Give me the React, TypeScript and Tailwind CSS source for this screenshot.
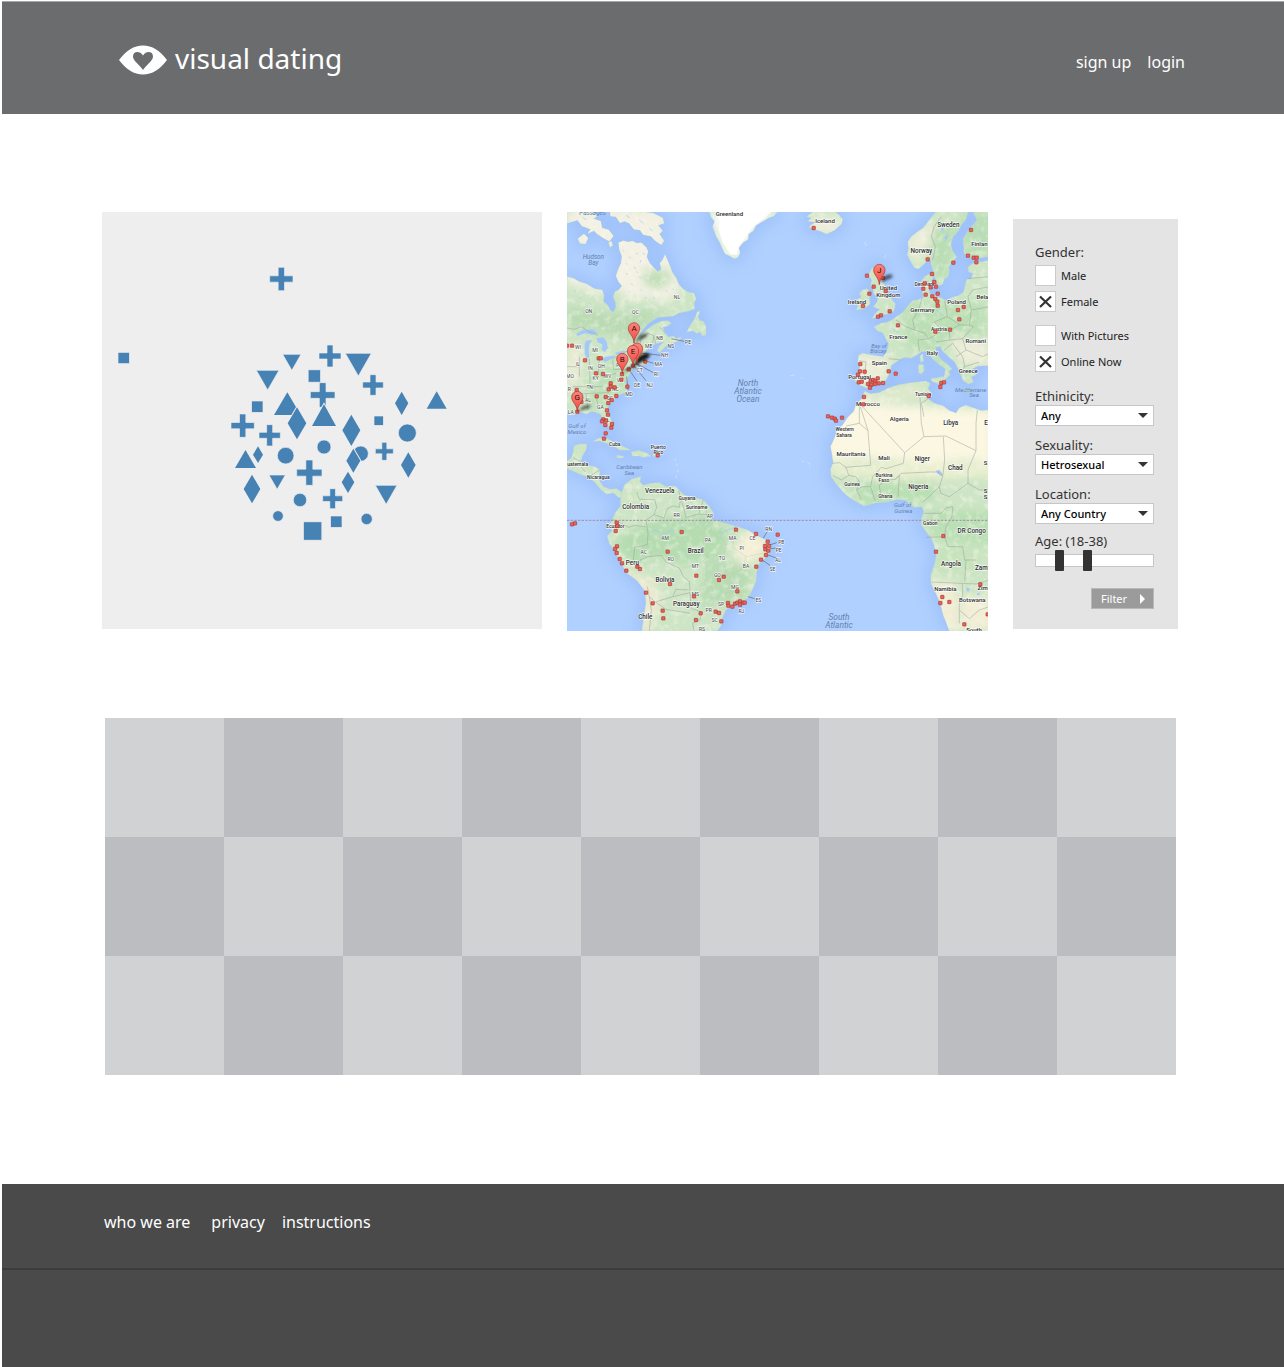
import { useState } from "react";
import type { ReactNode } from "react";

const BLUE = "#4682b4";

/* ---------- Shape scatter ---------- */

const pluses = [
  [184, 87, 35, 19], [330, 318, 33, 18], [459, 405, 31, 18], [308, 435, 37, 20], [68, 527, 35, 19],
  [149, 556, 32, 18], [493, 604, 27, 15], [268, 668, 38, 21], [338, 746, 30, 17],
];
const downTriangles = [
  [188, 243, 313, 361], [376, 454, 310, 378], [109, 177, 361, 420], [147, 196, 675, 718], [466, 531, 706, 763],
];
const upTriangles = [
  [162, 242, 427, 495], [276, 348, 463, 528], [620, 680, 424, 476], [45, 108, 600, 654],
];
const diamonds = [
  [545, 460, 20, 35], [231, 520, 28, 48], [394, 541, 27, 47], [114, 614, 15, 25],
  [400, 632, 21, 36], [565, 645, 22, 38], [96, 717, 25, 43], [384, 697, 19, 32],
];
const circles = [
  [562, 549, 27], [312, 591, 21], [197, 617, 25], [422, 611, 23], [240, 750, 20], [174, 798, 16], [440, 807, 17],
];
const squares = [
  [283, 378, 37], [112, 470, 34], [476, 512, 28], [278, 843, 55], [349, 815, 34], [-289, 324, 34],
];

function ShapePlot() {
  return (
    <svg viewBox="-354 -114 1320 1251" className="block w-full bg-[#eeeeee]" role="img" aria-label="Matches plotted as shapes">
      <g fill={BLUE} stroke="#eeeeee" strokeWidth="2">
        {circles.map(([x, y, r]) => <circle key={`${x}-${y}`} cx={x} cy={y} r={r} />)}
        {squares.map(([x, y, s]) => <rect key={`${x}-${y}`} x={x - s / 2} y={y - s / 2} width={s} height={s} />)}
        {pluses.map(([x, y, r, t]) => {
          const h = t / 2;
          return (
            <path key={`${x}-${y}`} d={`M${x - h} ${y - r}h${t}v${r - h}h${r - h}v${t}h${h - r}v${r - h}h${-t}v${h - r}h${h - r}v${-t}h${r - h}z`} />
          );
        })}
        {downTriangles.map(([a, b, t, p]) => <path key={`${a}-${t}`} d={`M${a} ${t}H${b}L${(a + b) / 2} ${p}z`} />)}
        {upTriangles.map(([a, b, p, t]) => <path key={`${a}-${t}`} strokeWidth="6" paintOrder="stroke" d={`M${a} ${t}H${b}L${(a + b) / 2} ${p}z`} />)}
        {diamonds.map(([x, y, w, h]) => <path key={`${x}-${y}`} strokeWidth="6" paintOrder="stroke" d={`M${x} ${y - h}l${w} ${h}l${-w} ${h}l${-w} ${-h}z`} />)}
      </g>
    </svg>
  );
}

/* ---------- Map ---------- */

const land = [
  // North America
  "M3 200L20 204 40 215 62 222 85 236 108 240 114 256 112 275 124 284 134 302 142 307 150 292 148 275 142 262 146 246 158 240 168 228 158 215 150 198 156 180 165 160 168 140 160 118 158 98 172 92 186 96 200 94 212 100 226 98 240 112 246 124 242 140 250 158 264 174 276 186 286 178 282 160 290 150 297 134 304 150 312 168 318 186 330 204 338 222 350 236 366 246 384 250 390 268 384 280 386 296 366 304 340 308 322 318 296 320 276 322 262 330 244 342 228 362 216 384 240 362 262 344 286 334 306 332 316 340 304 348 290 352 296 368 308 382 322 378 330 386 346 382 336 394 312 402 296 412 282 426 274 424 280 408 296 396 280 398 262 404 246 414 238 428 240 444 226 452 240 456 246 450 246 460 226 466 204 472 194 486 186 500 184 520 176 506 172 500 180 526 184 544 166 552 150 558 142 572 128 584 122 600 130 620 140 638 142 656 132 658 122 640 112 632 104 612 88 606 74 604 62 612 42 606 20 614 3 612z",
  "M362 366L374 344 386 326 394 306 402 304 396 320 402 332 412 334 420 350 420 374 410 378 402 366 392 370 380 362z",
  // Arctic islands
  "M3 6H78L96 16 82 26 104 34 108 54 128 60 142 78 130 94 112 84 94 72 84 62 66 70 74 58 48 48 34 30 3 40z",
  "M36 86L54 72 66 84 58 102 42 100z",
  "M132 6H236L262 10 290 24 294 40 276 46 290 62 280 72 294 92 286 104 268 92 254 78 232 74 222 60 204 58 190 40 176 34 162 38 150 20 134 18z",
  "M128 98l8 -4 4 12 -8 6z",
  // Greenland
  "M430 6L436 22 446 34 440 50 446 66 452 82 462 98 470 118 478 132 492 138 504 146 516 142 522 128 518 114 530 98 546 88 548 72 562 62 570 46 590 34 606 24 624 18 634 6z",
  // Iceland
  "M740 6L722 20 736 24 726 34 750 36 734 46 730 52 746 58 760 62 782 72 806 60 826 42 830 28 818 14 808 6z",
  // Scandinavia
  "M1110 6L1096 22 1084 38 1072 54 1054 66 1036 80 1026 96 1028 116 1024 134 1034 154 1044 172 1058 176 1074 162 1088 148 1094 150 1098 170 1104 190 1108 212 1118 228 1130 222 1134 208 1146 200 1150 184 1148 170 1162 152 1172 140 1160 124 1154 104 1160 82 1176 64 1186 44 1198 30 1206 6z",
  "M1222 6L1234 30 1216 50 1204 66 1192 88 1194 110 1194 128 1208 142 1232 146 1270 138V6z",
  // Continental Europe
  "M1270 152L1240 156 1220 160 1206 172 1208 186 1222 190 1214 208 1204 206 1198 222 1194 246 1176 258 1158 262 1140 272 1126 264 1112 260 1102 252 1094 256 1088 240 1096 214 1102 198 1090 192 1076 200 1066 214 1068 240 1074 262 1056 270 1040 272 1026 288 1014 304 998 316 978 330 960 338 946 340 924 350 934 362 950 368 960 386 968 402 962 426 952 440 920 436 890 430 878 436 876 456 882 470 874 494 868 514 884 526 902 534 922 524 946 520 960 510 972 486 976 466 996 452 1014 442 1036 444 1052 436 1068 424 1084 424 1096 442 1118 462 1138 476 1136 496 1126 514 1140 506 1152 494 1148 484 1158 476 1142 462 1124 448 1112 430 1108 412 1122 408 1130 424 1148 440 1166 456 1176 474 1184 492 1192 512 1208 522 1222 516 1216 500 1230 494 1218 476 1236 468 1270 466z",
  "M1096 506L1130 500 1132 514 1120 522 1098 514z",
  "M1058 464h14l2 18 -8 10 -8 -4z", "M1062 438l8 -6 2 22 -8 2z",
  "M1192 538l24 2 -2 6 -22 -4z", "M984 490l8 -2 2 6 -8 2z",
  // Great Britain and Ireland
  "M916 178L930 164 948 168 940 184 956 196 948 214 958 228 962 248 972 262 988 282 984 302 964 312 944 314 918 326 930 308 942 298 922 290 934 276 936 262 924 252 922 238 914 228 918 210 908 196z",
  "M890 240L904 236 914 248 910 262 912 282 894 296 872 300 876 282 874 268 886 262 880 250z",
  // Africa
  "M896 544L914 552 940 548 968 534 1000 524 1036 518 1080 514 1092 520 1086 536 1096 548 1086 566 1104 580 1132 588 1150 602 1170 610 1180 594 1200 586 1222 594 1246 602 1270 600V1263H1150L1142 1240 1132 1216 1122 1176 1108 1146 1096 1122 1094 1096 1106 1062 1112 1034 1104 1004 1094 982 1078 962 1066 944 1066 926 1074 906 1068 890 1046 892 1030 882 1020 870 992 868 962 876 930 878 894 888 868 874 844 858 826 840 808 818 796 800 794 778 802 758 798 730 794 710 806 684 812 664 830 646 846 622 864 604 872 580 888 566z",
  // Central America
  "M3 752L16 744 22 726 24 708 40 702 62 702 60 720 48 740 44 754 62 766 88 770 102 780 98 808 112 830 132 838 152 836 166 846 170 862 158 862 142 848 122 852 104 838 88 818 68 800 40 792 20 782 3 776z",
  // South America
  "M168 846L176 824 196 808 224 800 222 816 232 826 256 820 280 818 300 830 328 828 340 842 356 856 384 862 412 870 430 890 442 908 434 928 450 932 476 940 508 948 544 960 574 978 600 990 612 1006 612 1026 598 1044 580 1060 572 1086 570 1112 560 1138 546 1164 522 1176 500 1182 480 1200 470 1220 464 1248 452 1263H228L234 1220 240 1180 238 1144 214 1112 184 1090 164 1058 148 1026 130 1000 124 978 138 962 130 946 140 926 148 908 164 888 164 864z",
  // Caribbean
  "M82 694L100 684 124 686 148 700 176 712 192 720 162 720 144 708 118 698 98 692z",
  "M196 726L218 722 240 728 254 738 234 742 220 738 200 738z",
  "M154 736l20 4 -8 5 -14 -3z", "M262 733h20v6h-20z",
];

const lakes = [
  "M56 402L60 392 78 390 72 400 68 418 70 440 62 446 56 430z",
  "M92 384L112 382 122 396 126 414 116 426 106 418 110 404 94 396z",
  "M30 372L50 360 80 358 96 370 78 374 56 370 36 378z",
  "M104 448L122 440 148 436 142 444 118 456z",
  "M148 428L170 422 182 424 166 432 150 434z",
  "M1110 782l10 -2 10 12 -4 6 -12 -8z", "M1204 1132l8 6 -6 8 -6 -8z", "M1234 1150l8 0 -2 5 -8 0z",
  "M1136 84l6 -12 4 8 -6 14z", "M1126 60l4 -22 4 14 -4 14z",
];

const borders = [
  "M3 354L24 358 46 350 64 362 96 376", "M140 446L176 428 202 412 222 404 226 382 246 370 262 376 270 402",
  "M40 440V500M70 446L72 520M100 450L96 500M3 470H44M20 530H110M110 500L150 490M20 552L130 548M60 552L66 600M90 552L96 590M140 448L142 478H186",
  "M212 846L220 868 266 868 272 892 264 914 240 930 246 970 244 1004 206 1012 202 1050 210 1056 246 1040 286 1036 300 1056 340 1074 352 1100 370 1114 372 1140 330 1138 320 1160 268 1176 250 1160 244 1130",
  "M264 914L294 924 304 896 322 888 340 892 344 864 338 842M344 864L352 890 360 922 398 912 412 870M398 912L430 914",
  "M140 928L166 940 188 952 206 946 238 950", "M250 1160L256 1200 250 1263M320 1160L372 1148 376 1196 408 1206 402 1230 380 1240 384 1263M268 1176L300 1198 372 1210",
  "M22 744L44 754M44 770L58 786M68 800L102 780",
  "M880 574L880 640 840 648M880 580L906 662 914 766 838 772M906 662L880 640M880 580L1016 728 1074 680 1140 678 1230 722V640L1234 600M1074 680L1066 640 1062 560M1086 566L1066 580 1074 620",
  "M1016 728L1012 760 960 776 946 772 920 800 914 830 928 874M800 760L820 758 840 772 848 796 826 810 800 796M848 796L870 800 880 816 872 840 886 868M914 830L890 830 870 840M946 868L940 826 960 810 988 808 1000 796 996 860M988 808L1006 790 1090 786 1116 786 1130 800 1120 830 1090 860 1070 876M1130 800L1136 750 1132 680M1230 722L1206 780 1206 820 1150 860 1124 850 1120 830M1206 820L1240 840 1270 840M1074 910L1124 910 1140 894 1160 890 1158 920 1140 950 1136 980 1080 982M1136 980L1146 1010 1190 1010 1196 1050 1230 1050M1096 1116L1230 1122 1270 1110M1196 1116L1200 1050M1190 1122V1160L1180 1170 1180 1240M1180 1200L1210 1226 1240 1200 1270 1190",
  "M1100 150L1108 110 1096 80 1104 50 1126 20", "M1078 214L1090 216M1068 264L1058 300 1040 330 1046 360 1078 370 1086 386 1056 390 1060 424M1046 360L1020 350 990 330M968 446L1006 450M880 452L900 456 896 500 888 520M1136 272L1144 320 1104 336 1130 360 1100 380 1086 386M1144 320L1182 344 1210 346 1216 300 1206 260M1182 344L1150 362 1130 360M1150 362L1152 390 1110 396M1152 390L1190 386 1222 350 1210 346M1190 386L1200 420 1170 440M1200 420L1250 440 1270 430M1134 420L1160 400 1190 440 1196 470 1184 490M1196 470L1240 456M1216 300L1270 290M1206 260L1220 240 1270 230M1204 206L1270 200",
  "M260 400L264 376", "M296 368L282 352",
];

const stateBorders =
  "M420 900L430 960 410 1000 424 1040 400 1064 346 1074M430 960L480 1000 470 1060 440 1070M508 948L500 1010 540 1040 532 1072M540 1040L590 1030M532 1072L500 1094 520 1140 470 1150M424 1040L420 1110 380 1150M470 1150L440 1180 408 1206";

const leaders = "M316 386L354 394M216 428L284 436M232 450L262 460M214 462L262 488M206 470L240 512M190 480L212 512M182 500L186 540M210 460L222 470M592 984L604 964M608 1006L632 998M612 1016L636 1014M604 1034L630 1044M586 1048L612 1066M546 1160L566 1166M520 1176L526 1190";

const dots = [
  [3, 407], [18, 407], [57, 451], [98, 445], [104, 445], [90, 490], [111, 492], [166, 509], [134, 520], [128, 538], [134, 530], [146, 532],
  [184, 530], [92, 559], [119, 561], [151, 558], [127, 579], [137, 570], [32, 540], [46, 576], [34, 605], [123, 601], [126, 614], [112, 628],
  [120, 632], [238, 455], [168, 492], [188, 478], [201, 467], [108, 634], [118, 645], [138, 642], [136, 653], [119, 670], [114, 686],
  [743, 54], [903, 197], [923, 230], [910, 251], [891, 288], [971, 304], [945, 316], [936, 320], [951, 204], [959, 243], [996, 346],
  [1085, 148], [1162, 158], [1206, 137], [1223, 143], [1232, 143], [1231, 157], [1215, 60], [1098, 192], [1072, 236], [1076, 220],
  [1105, 216], [1110, 230], [1094, 232], [1079, 254], [1115, 251], [1099, 259], [1108, 267], [1114, 275], [1115, 287], [1193, 291],
  [1176, 300], [1180, 328], [1152, 359], [1108, 365], [883, 462], [882, 484], [896, 485], [968, 484], [989, 491], [876, 494], [878, 517],
  [887, 515], [906, 522], [914, 512], [922, 510], [928, 514], [935, 505], [938, 520], [926, 522], [916, 524], [912, 533], [951, 519],
  [1126, 519], [1134, 517], [1123, 531], [1088, 558], [894, 561], [892, 583], [786, 619], [798, 623], [806, 626], [810, 632], [828, 623],
  [275, 736], [18, 943], [27, 940], [152, 938], [154, 948], [149, 963], [153, 1009], [147, 1017], [152, 1029], [161, 1047], [168, 1060],
  [181, 1082], [214, 1070], [222, 1077], [347, 966], [305, 1025], [510, 959], [570, 972], [605, 995], [597, 1008], [609, 1008], [598, 1018],
  [607, 1022], [600, 1035], [585, 1049], [571, 1070], [391, 1097], [473, 1100], [459, 1110], [312, 1122], [240, 1148], [260, 1180],
  [290, 1202], [292, 1225], [384, 1159], [404, 1210], [390, 1230], [449, 1205], [459, 1209], [466, 1234], [486, 1179], [487, 1187],
  [499, 1190], [507, 1181], [514, 1178], [522, 1174], [522, 1184], [531, 1178], [536, 1178], [514, 1144], [635, 974], [1132, 978], [1110, 1025],
  [1243, 1123], [1129, 1161], [1123, 1179], [1150, 1176], [1195, 1243], [1265, 1213],
];

const countries: [string, number, number, number][] = [
  ["Greenland", 490, 17, 18], ["Iceland", 777, 38, 18], ["Sweden", 1147, 50, 19], ["Norway", 1066, 128, 19], ["Finlan", 1240, 107, 18],
  ["United", 967, 241, 18], ["Kingdom", 967, 260, 18], ["Ireland", 873, 281, 18], ["Denmark", 1076, 229, 15], ["Poland", 1172, 282, 18],
  ["Bela", 1249, 266, 18], ["Germany", 1069, 307, 18], ["Austria", 1119, 362, 15], ["France", 997, 388, 18], ["Romani", 1229, 398, 18],
  ["Italy", 1099, 436, 18], ["Spain", 940, 465, 18], ["Greece", 1207, 488, 18], ["Portugal", 881, 507, 18], ["Tunisia", 1071, 558, 15],
  ["Morocco", 906, 588, 18], ["Algeria", 1000, 632, 18], ["Libya", 1154, 645, 19], ["E", 1260, 645, 19], ["Western", 836, 664, 15], ["Sahara", 834, 680, 15],
  ["Mauritania", 855, 737, 18], ["Mali", 954, 750, 18], ["Niger", 1069, 754, 19], ["Chad", 1168, 781, 19], ["Burkina", 954, 800, 15],
  ["Faso", 954, 816, 15], ["Guinea", 858, 827, 15], ["Nigeria", 1057, 837, 19], ["Ghana", 958, 864, 15], ["Gabon", 1093, 944, 15],
  ["DR Congo", 1217, 968, 19], ["Angola", 1155, 1069, 19], ["Zam", 1246, 1080, 19], ["Namibia", 1138, 1144, 18], ["Zim", 1250, 1140, 18],
  ["Botswana", 1219, 1177, 18], ["South", 1224, 1266, 18], ["S", 1259, 766, 18], ["S", 1259, 850, 18], ["S", 1259, 868, 18],
  ["Cuba", 146, 707, 15], ["Puerto", 277, 716, 15], ["Rico", 277, 732, 15], ["uatemala", 35, 769, 15], ["Nicaragua", 97, 808, 15],
  ["Venezuela", 281, 849, 19], ["Guyana", 363, 869, 15], ["Suriname", 392, 896, 15], ["Colombia", 209, 898, 19], ["Ecuador", 148, 953, 15],
  ["Brazil", 389, 1028, 19], ["Peru", 199, 1064, 19], ["Bolivia", 297, 1116, 19], ["Paraguay", 361, 1188, 19], ["Chile", 238, 1228, 19],
];

const regions: [string, number, number][] = [
  ["ON", 68, 308], ["QC", 208, 312], ["NL", 333, 266], ["NB", 281, 389], ["PE", 366, 402], ["NS", 314, 415], ["ME", 248, 413], ["NH", 296, 442],
  ["MA", 277, 468], ["RI", 271, 499], ["NJ", 251, 532], ["DE", 213, 532], ["MD", 189, 557], ["CT", 221, 485], ["WI", 36, 417], ["MI", 87, 427],
  ["IL", 36, 468], ["IN", 73, 479], ["OH", 106, 473], ["PA", 160, 470], ["KY", 89, 511], ["WV", 125, 503], ["VA", 162, 515], ["NC", 148, 543],
  ["TN", 71, 538], ["MO", 12, 505], ["R", 10, 543], ["SC", 132, 569], ["AL", 66, 576], ["GA", 103, 597], ["LA", 14, 612], ["FL", 122, 636],
  ["RR", 332, 922], ["AP", 432, 924], ["AM", 297, 990], ["PA", 426, 997], ["MA", 500, 990], ["CE", 560, 990], ["RN", 608, 962], ["PI", 527, 1020],
  ["AC", 233, 1033], ["RO", 314, 1054], ["TO", 468, 1049], ["MT", 388, 1075], ["GO", 454, 1101], ["BA", 540, 1073], ["SE", 619, 1082],
  ["AL", 636, 1055], ["PE", 638, 1025], ["PB", 646, 1001], ["MG", 507, 1138], ["MS", 388, 1158], ["ES", 577, 1175], ["SP", 465, 1188], ["RJ", 526, 1208],
  ["PR", 428, 1206], ["SC", 446, 1236], ["RS", 408, 1262],
];

const seas: [string, number, number, number][] = [
  ["Passages", 80, 15, 19], ["Hudson", 82, 147, 19], ["Bay", 82, 165, 19], ["North", 546, 528, 25], ["Atlantic", 546, 552, 25], ["Ocean", 546, 576, 25],
  ["Bay of", 939, 413, 17], ["Biscay", 937, 429, 17], ["Mediterrane", 1214, 547, 18], ["Sea", 1224, 562, 18],
  ["Gulf of", 33, 655, 18], ["Mexico", 33, 673, 18], ["Caribbean", 190, 778, 18], ["Sea", 190, 794, 18],
  ["Gulf of", 1010, 890, 18], ["Guinea", 1012, 908, 18], ["South", 819, 1230, 25], ["Atlantic", 819, 1254, 25],
];

const pins: [string, number, number][] = [
  ["A", 204, 355], ["", 213, 416], ["E", 201, 423], ["B", 169, 447], ["G", 34, 561], ["J", 940, 180],
];

function WorldMap() {
  return (
    <svg viewBox="3 6 1263 1257" className="block w-full" role="img" aria-label="Map of people around the Atlantic">
      <defs>
        <clipPath id="land-clip">{land.map((d) => <path key={d} d={d} />)}</clipPath>
        <filter id="soft" x="-30%" y="-30%" width="160%" height="160%"><feGaussianBlur stdDeviation="12" /></filter>
        <filter id="halo"><feGaussianBlur stdDeviation="22" /></filter>
        <filter id="shade" x="-30%" y="-30%" width="160%" height="160%"><feGaussianBlur stdDeviation="4" /></filter>
        <filter id="terrain" x="0" y="0" width="100%" height="100%">
          <feTurbulence type="fractalNoise" baseFrequency="0.05" numOctaves="3" seed="7" />
          <feColorMatrix values="0 0 0 0 0.96  0 0 0 0 0.95  0 0 0 0 0.84  0 3 0 0 -1.4" />
        </filter>
        <linearGradient id="pin-fill" x1="0" y1="0" x2="0" y2="1">
          <stop offset="0" stopColor="#ff8279" /><stop offset="1" stopColor="#ee4a43" />
        </linearGradient>
      </defs>
      <rect x="3" y="6" width="1263" height="1257" fill="#b0d0ff" />
      <g fill="#9cc0f9" stroke="#9cc0f9" strokeWidth="34" strokeLinejoin="round" filter="url(#halo)" opacity="0.85">
        {land.map((d) => <path key={d} d={d} />)}
      </g>
      <g fill="#cde5c5" stroke="#c2d8cf" strokeWidth="1.5" strokeLinejoin="round">
        {land.map((d) => <path key={d} d={d} />)}
      </g>
      <g clipPath="url(#land-clip)">
        <g filter="url(#soft)">
          <path fill="#f3f1e4" d="M150 80H300L345 240 300 280 240 260 200 275 170 250 130 230zM3 190L120 235 110 258 50 235 3 225zM3 0H300V110H3z" />
          <path fill="#c3dfb9" d="M230 180L300 175 320 210 280 240 230 220z" />
          <path fill="#b9dab3" d="M3 290L150 310 300 300 250 340 200 390 100 370 3 350z" />
          <path fill="#bfe0ba" d="M90 470L200 440 180 540 110 600 50 600 70 520z" />
          <path fill="#ebecd6" d="M3 400L50 410 40 520 3 540z" />
          <path fill="#fbf7e1" d="M780 590L900 560 960 585 1100 590 1280 600V760L1200 750 1100 760 900 745 780 755z" />
          <path fill="#eaefd0" d="M790 760H1280V800L1000 810 790 790z" />
          <path fill="#b9dfb4" d="M840 820L1100 810 1110 870 900 890zM1080 900H1280V1010L1100 985z" />
          <path fill="#c6e3bc" d="M1110 1010H1240V1090H1110z" />
          <path fill="#f2eed6" d="M1090 1110L1170 1120 1180 1263H1120zM1180 1160H1280V1263H1190z" />
          <path fill="#b4dcb0" d="M140 990L260 930 420 910 490 960 470 1050 330 1060 280 1040 200 1070z" />
          <path fill="#b8dbb3" d="M420 1060L560 1060 540 1170 400 1190z" />
          <path fill="#f4efd6" d="M540 960L600 980 590 1040 530 1070 500 1020z" />
          <path fill="#ecead0" d="M120 1000L200 1090 260 1110 290 1170 250 1263 220 1263 230 1150 140 1040z" />
          <path fill="#bbdfb5" d="M1010 280H1260V390L1130 400 1020 420z" />
          <path fill="#ecedd8" d="M870 430L980 440 950 520 870 530zM1150 380L1270 390V470L1180 460zM1020 90L1100 30 1110 60 1050 170z" />
          <path fill="#b9ddb5" d="M1100 60L1180 40 1140 220 1100 200zM1190 10H1280V140H1190zM1090 380L1070 420 1110 470 1150 490 1110 420z" />
          <path fill="#dfe9cd" d="M890 550L1070 520 1080 560 900 590z" />
          <path fill="#fdfdfd" d="M430 6H640L560 60 520 140 480 135z" />
          <path fill="#efeedd" d="M730 20H830V70H730z" />
        </g>
        <rect x="3" y="6" width="1263" height="1257" filter="url(#terrain)" opacity="0.4" />
        <path fill="#ffffff" d="M448 6H616L560 52 540 80 518 108 512 134 494 134 470 96 458 60 462 34z" opacity="0.9" />
      </g>
      <g fill="#a5c8fa">{lakes.map((d) => <path key={d} d={d} />)}</g>
      <g fill="none" stroke="#a5c8fa" strokeWidth="2">
        <path d="M170 120l5 5M190 140l4 6M210 132l6 -2M204 170l5 8M226 150l-4 8M180 190l6 4M220 200l5 6M250 200l4 5M196 220l5 6M224 238l5 4M262 262l5 4M300 240l4 5M40 262l4 5M70 280l6 4M24 240l5 4M170 330l4 5M230 300l5 3M290 214l5 4M320 236l3 4M180 160l4 4M212 184l4 5M188 242l4 5M236 262l6 3M206 256l4 4M232 128l3 6M100 300l4 4M186 290l5 4" />
        <path d="M50 22l12 8M180 16l12 8M220 30l12 10M250 54l10 10M330 960l-40 10 -30 -12M510 950l-50 20M1220 30l8 20M1240 60l6 16M1252 90l-10 12M1110 300l20 16M980 360l20 8" />
      </g>
      <g fill="none" stroke="#9a9f9c" strokeWidth="2" strokeLinejoin="round" opacity="0.75">
        {borders.map((d) => <path key={d} d={d} />)}
      </g>
      <path d={stateBorders} fill="none" stroke="#b5c4b2" strokeWidth="1.5" opacity="0.6" />
      <g fill="none" stroke="#dbe8f5" strokeWidth="2">
        <path d="M894 100l6 -4M898 108l4 -6M960 134l-6 10M672 498l14 -4M704 502l6 4M708 752l6 4M724 756l8 6M730 766l4 4M326 746l4 6M332 760l2 8M334 780l2 8M332 796l-2 8" />
      </g>
      <path d="M3 931H1266" stroke="#a68aa8" strokeWidth="3" strokeDasharray="7 4" />
      <path d={leaders} fill="none" stroke="#5c6670" strokeWidth="2" />
      <g fontFamily="Roboto, sans-serif" textAnchor="middle">
        <g fill="#6481ab" fontStyle="italic">
          {seas.map(([t, x, y, s]) => <text key={`${t}${y}`} x={x} y={y} fontSize={s}>{t}</text>)}
        </g>
        <g fill="#444" stroke="#fff" strokeOpacity="0.8" strokeWidth="4" strokeLinejoin="round" paintOrder="stroke" fontSize="15">
          {regions.map(([t, x, y]) => <text key={`${t}${x}`} x={x} y={y}>{t}</text>)}
        </g>
        <g fill="#2e2e2e" stroke="#fff" strokeOpacity="0.8" strokeWidth="4" strokeLinejoin="round" paintOrder="stroke" fontWeight="500">
          {countries.map(([t, x, y, s]) => <text key={`${t}${y}`} x={x} y={y} fontSize={s}>{t}</text>)}
        </g>
      </g>
      <g fill="#f0625a" stroke="#a23a35" strokeWidth="2">
        {dots.map(([x, y]) => <rect key={`${x}-${y}`} x={x - 5} y={y - 5} width="10" height="10" rx="1" />)}
      </g>
      <g filter="url(#shade)">
        <path fill="#000" opacity="0.6" d="M205 398L222 374 246 370 240 382zM34 604L52 588 76 584 70 594zM940 220L956 198 976 192 980 202 962 210z" />
        <path fill="#000" opacity="0.9" d="M170 490L184 476 204 466 216 440 238 428 254 434 244 446 226 456 202 472 186 480z" />
      </g>
      {pins.map(([t, x, y]) => (
        <g key={`${x}-${y}`}>
          <path fill="url(#pin-fill)" stroke="#9b3833" strokeWidth="2" d={`M${x} ${y + 44}C${x - 1} ${y + 22} ${x - 17} ${y + 16} ${x - 17} ${y}A17 17 0 0 1 ${x + 17} ${y}C${x + 17} ${y + 16} ${x + 1} ${y + 22} ${x} ${y + 44}z`} />
          <text x={x} y={y + 8} textAnchor="middle" fontFamily="Roboto, sans-serif" fontSize="24" fill="#2a0f0d">{t}</text>
        </g>
      ))}
    </svg>
  );
}

/* ---------- Filter panel ---------- */

function CheckRow({ label, defaultChecked = false }: { label: string; defaultChecked?: boolean }) {
  return (
    <label className="flex h-[21px] items-center gap-[5px] text-[11px] leading-[21px] text-[#222]">
      <span className="relative block size-[21px]">
        <input type="checkbox" defaultChecked={defaultChecked} className="peer block size-[21px] appearance-none border border-[#cbcbcb] bg-white" />
        <svg viewBox="0 0 21 21" className="pointer-events-none absolute inset-0 hidden peer-checked:block" aria-hidden="true">
          <path d="M5 5.500L16 16M16 5.500L5 16" stroke="#333" strokeWidth="2.200" fill="none" />
        </svg>
      </span>
      {label}
    </label>
  );
}

function SelectField({ id, label, options }: { id: string; label: string; options: string[] }) {
  return (
    <div>
      <FieldLabel htmlFor={id}>{label}</FieldLabel>
      <div className="relative">
        <select id={id} className="block h-[21px] w-full appearance-none border border-[#c6c6c6] bg-white px-[5px] text-[11px] leading-[19px] font-medium text-black">
          {options.map((o) => <option key={o}>{o}</option>)}
        </select>
        <svg viewBox="0 0 10 5" className="pointer-events-none absolute top-2 right-[6px] w-[10px]" aria-hidden="true">
          <path d="M0 0H10L5 5z" fill="#333" />
        </svg>
      </div>
    </div>
  );
}

function FieldLabel({ htmlFor, children }: { htmlFor: string; children: ReactNode }) {
  return <label htmlFor={htmlFor} className="block text-[13px] leading-[18px] text-[#333]">{children}</label>;
}

const rangeClass =
  "pointer-events-none absolute inset-0 h-[21px] w-full appearance-none bg-transparent [&::-webkit-slider-thumb]:pointer-events-auto [&::-webkit-slider-thumb]:h-[21px] [&::-webkit-slider-thumb]:w-[9px] [&::-webkit-slider-thumb]:appearance-none [&::-webkit-slider-thumb]:rounded-[1px] [&::-webkit-slider-thumb]:bg-[#333]";

function Filters() {
  const [from, setFrom] = useState(18);
  const [to, setTo] = useState(38);
  return (
    <form className="mt-[7px] bg-[#e4e4e4] pt-6 pr-6 pb-5 pl-[22px]" onSubmit={(e) => e.preventDefault()}>
      <fieldset>
        <legend className="mb-1 block text-[13px] leading-[18px] text-[#333]">Gender:</legend>
        <div className="flex flex-col gap-[5px]">
          <CheckRow label="Male" />
          <CheckRow label="Female" defaultChecked />
        </div>
      </fieldset>
      <div className="mt-[13px] mb-[15px] flex flex-col gap-[5px]">
        <CheckRow label="With Pictures" />
        <CheckRow label="Online Now" defaultChecked />
      </div>
      <div className="flex flex-col gap-[10px]">
        <SelectField id="ethnicity" label="Ethinicity:" options={["Any"]} />
        <SelectField id="sexuality" label="Sexuality:" options={["Hetrosexual", "Homosexual", "Bisexual"]} />
        <SelectField id="location" label="Location:" options={["Any Country"]} />
      </div>
      <div className="mt-2">
        <FieldLabel htmlFor="age-from">{`Age: (${from}-${to})`}</FieldLabel>
        <div className="relative flex h-[21px] items-center">
          <div className="h-[13px] w-full border border-[#c6c6c6] bg-white" />
          <input id="age-from" type="range" min={4} max={82} value={from} onChange={(e) => setFrom(Math.min(Number(e.target.value), to))} className={rangeClass} />
          <input aria-label="Maximum age" type="range" min={4} max={82} value={to} onChange={(e) => setTo(Math.max(Number(e.target.value), from))} className={rangeClass} />
        </div>
      </div>
      <button type="submit" className="mt-[17px] ml-auto flex h-[21px] w-[63px] items-center justify-between border border-[#b8b8b8] bg-[#9b9b9b] pr-2 pl-[9px] text-[11px] leading-[19px] text-white">
        Filter
        <svg viewBox="0 0 5 10" className="w-[5px]" aria-hidden="true"><path d="M0 0L5 5L0 10z" fill="#fff" /></svg>
      </button>
    </form>
  );
}

/* ---------- Page ---------- */

function Logo() {
  return (
    <a href="#" className="flex items-center gap-2 text-white">
      <svg viewBox="0 0 48 30" className="mt-1 w-[48px]" aria-hidden="true">
        <path fill="#fff" fillRule="evenodd" d="M0 15C7 5.500 15 0.500 24 0.500S41 5.500 48 15C41 24.500 33 29.500 24 29.500S7 24.500 0 15zM24 25C21 20 14 16 14 11.500C14 6 21 5.500 24 10.500C27 5.500 34 6 34 11.500C34 16 27 20 24 25z" />
      </svg>
      <span className="text-[28px] leading-[40px]">visual dating</span>
    </a>
  );
}

const tiles = Array.from({ length: 27 }, (_, i) => i);

export default function App() {
  return (
    <div className="bg-white pt-px pl-[2px] font-['Noto_Sans',sans-serif]">
      <header className="flex h-[113px] items-center justify-between border-t border-[#a5a6a8] bg-[#6b6c6e] pr-[99px] pl-[117px]">
        <Logo />
        <nav className="mt-2 flex gap-4 text-[16px] leading-6 text-white">
          <a href="#signup">sign up</a>
          <a href="#login">login</a>
        </nav>
      </header>

      <main className="pr-[106px] pl-[100px]">
        <section className="grid grid-cols-[minmax(0,440fr)_minmax(0,421fr)_165px] items-start gap-[25px] pt-[98px]">
          <ShapePlot />
          <WorldMap />
          <Filters />
        </section>

        <section className="mt-[87px] mr-[2px] ml-[3px] grid grid-cols-9" aria-label="Profile pictures">
          {tiles.map((i) => (
            <div key={i} className={i % 2 === 0 ? "aspect-square bg-[#d1d2d4]" : "aspect-square bg-[#bcbdc1]"} />
          ))}
        </section>
      </main>

      <footer className="mt-[109px] bg-[#4a4a4b] pb-[97px]">
        <nav className="flex border-b-2 border-[#3c3c3d] pt-[26px] pb-[34px] pl-[102px] text-[16px] leading-6 text-white">
          <a href="#about" className="mr-[21px]">who we are</a>
          <a href="#privacy" className="mr-[17px]">privacy</a>
          <a href="#instructions">instructions</a>
        </nav>
      </footer>
    </div>
  );
}
